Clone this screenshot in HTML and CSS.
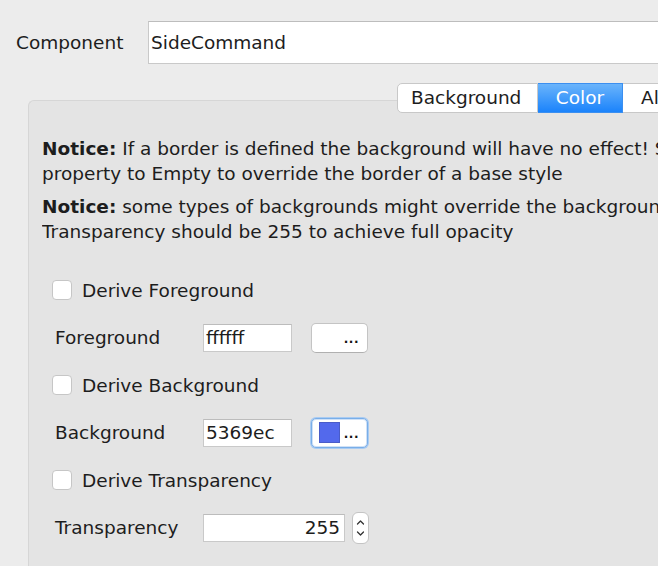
FILE: index.html
```html
<!DOCTYPE html>
<html>
<head>
<meta charset="utf-8">
<link rel="stylesheet" href="styles.css">
</head>
<body>
<div class="app">
  <div class="comp-row">
    <span class="comp-label">Component</span>
    <div class="comp-field">SideCommand</div>
  </div>
  <div class="panel">
    <div class="tabs">
      <div class="tab tab-bg">Background</div>
      <div class="tab tab-color active">Color</div>
      <div class="tab tab-al">Al</div>
    </div>
    <p class="notice"><b>Notice:</b> If a border is defined the background will have no effect! Set the border<br>property to Empty to override the border of a base style</p>
    <p class="notice"><b>Notice:</b> some types of backgrounds might override the background color.<br>Transparency should be 255 to achieve full opacity</p>

    <div class="form">
      <label class="check-row"><span class="checkbox"></span><span>Derive Foreground</span></label>
      <div class="field-row">
        <span class="field-label">Foreground</span>
        <div class="input hex">ffffff</div>
        <div class="pick-btn"><span class="dots">...</span></div>
      </div>
      <label class="check-row"><span class="checkbox"></span><span>Derive Background</span></label>
      <div class="field-row">
        <span class="field-label">Background</span>
        <div class="input hex">5369ec</div>
        <div class="pick-btn focused"><span class="swatch"></span><span class="dots">...</span></div>
      </div>
      <label class="check-row"><span class="checkbox"></span><span>Derive Transparency</span></label>
      <div class="field-row">
        <span class="field-label">Transparency</span>
        <div class="input num">255</div>
        <div class="spinner">
          <svg width="17" height="32" viewBox="0 0 17 32">
            <path d="M5.5 12 L8.5 9 L11.5 12" fill="none" stroke="#333" stroke-width="1.3" stroke-linecap="round" stroke-linejoin="round"/>
            <path d="M5.5 20 L8.5 23 L11.5 20" fill="none" stroke="#333" stroke-width="1.3" stroke-linecap="round" stroke-linejoin="round"/>
          </svg>
        </div>
      </div>
    </div>
  </div>
</div>
</body>
</html>
```

FILE: styles.css
```css
html, body {
  margin: 0;
  padding: 0;
  background: #ececec;
  overflow: hidden;
  width: 658px;
  height: 566px;
}
body {
  font-family: "DejaVu Sans", "Liberation Sans", sans-serif;
  font-size: 18.5px;
  color: #1d1d1d;
}
.app {
  padding-top: 21px;
}
.comp-row {
  display: flex;
  align-items: center;
  height: 43px;
}
.comp-label {
  width: 132px;
  padding-left: 16px;
  flex: none;
}
.comp-field {
  flex: 1;
  height: 43px;
  box-sizing: border-box;
  background: #fff;
  border: 1px solid #c9c9c9;
  border-right: none;
  border-top-color: #bdbdbd;
  padding-left: 2px;
  display: flex;
  align-items: center;
}
.panel {
  position: relative;
  margin-top: 36px;
  margin-left: 28px;
  width: 630px;
  height: 466px;
  box-sizing: border-box;
  background: #e4e4e4;
  border: 1px solid #d6d6d6;
  border-right: none;
  border-bottom: none;
  border-radius: 6px 0 0 0;
  padding-top: 35px;
  padding-left: 13px;
}
.tabs {
  position: absolute;
  top: -18px;
  left: 368px;
  display: flex;
  height: 30px;
}
.tab {
  box-sizing: border-box;
  height: 30px;
  display: flex;
  align-items: center;
  background: #fff;
  border: 1px solid #c8c8c8;
  border-left: none;
  color: #1d1d1d;
  line-height: 1;
}
.tab-bg {
  width: 141px;
  border-left: 1px solid #c8c8c8;
  border-radius: 5px 0 0 5px;
  padding-left: 13px;
}
.tab-color {
  width: 85px;
  justify-content: center;
}
.tab-al {
  width: 35px;
  padding-left: 18px;
  border-right: none;
  overflow: hidden;
  white-space: nowrap;
}
.tab.active {
  background: linear-gradient(#6ab4fb, #1b83fb);
  border-color: #3b8ff0;
  color: #fff;
}
.notice {
  margin: 0 0 8px 0;
  line-height: 25px;
  white-space: nowrap;
  overflow: hidden;
  width: 616px;
}
.notice b {
  font-weight: bold;
}
.form {
  margin-top: 35px;
  display: flex;
  flex-direction: column;
}
.check-row {
  display: flex;
  align-items: center;
  height: 22px;
  margin-bottom: 21px;
  padding-left: 10px;
}
.checkbox {
  width: 20px;
  height: 20px;
  box-sizing: border-box;
  background: #fff;
  border: 1px solid #c6c6c6;
  border-radius: 4px;
  margin-right: 10px;
  flex: none;
}
.field-row {
  display: flex;
  align-items: center;
  height: 31px;
  margin-bottom: 21px;
  padding-left: 13px;
}
.field-label {
  width: 148px;
  flex: none;
}
.input {
  box-sizing: border-box;
  height: 28px;
  background: #fff;
  border: 1px solid #c9c9c9;
  border-top-color: #bcbcbc;
  display: flex;
  align-items: center;
  flex: none;
}
.hex {
  width: 89px;
  padding-left: 2px;
}
.num {
  width: 142px;
  justify-content: flex-end;
  padding-right: 4px;
}
.pick-btn {
  box-sizing: border-box;
  width: 57px;
  height: 30px;
  margin-left: 19px;
  background: #fff;
  border: 1px solid #c4c4c4;
  border-bottom-color: #b0b0b0;
  border-radius: 5px;
  display: flex;
  align-items: center;
  padding-left: 7px;
  position: relative;
  flex: none;
}
.pick-btn.focused {
  border: 1px solid #79aee8;
  box-shadow: 0 0 0 1px #a9cbf2, inset 0 0 0 1px #cfe1f7;
}
.dots {
  position: absolute;
  right: 8px;
  bottom: 7px;
  font-size: 12px;
  font-weight: bold;
  line-height: 1;
  letter-spacing: 0.5px;
  color: #111;
}
.swatch {
  width: 21px;
  height: 21px;
  background: #5369ec;
  border: 1px solid #4a5cc8;
  box-sizing: border-box;
}
.spinner {
  box-sizing: border-box;
  width: 17px;
  height: 32px;
  margin-left: 7px;
  background: #fff;
  border: 1px solid #c4c4c4;
  border-radius: 6px;
  flex: none;
  display: flex;
  align-items: center;
  justify-content: center;
  overflow: hidden;
}
.spinner svg {
  display: block;
  flex: none;
}
```
